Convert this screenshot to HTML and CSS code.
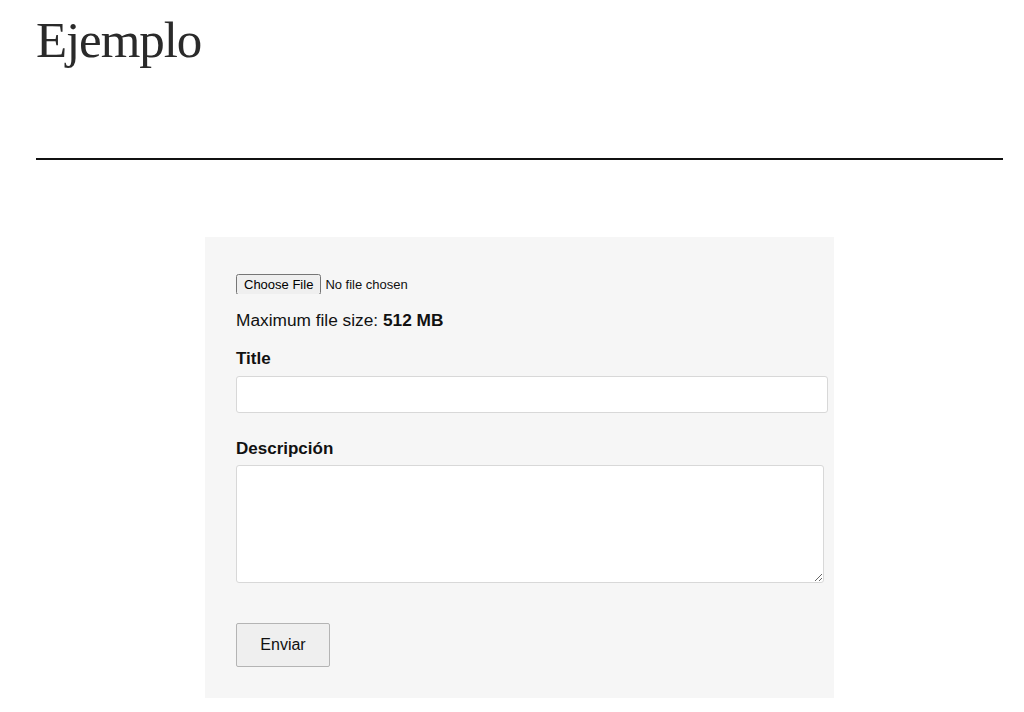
FILE: index.html
```html
<!DOCTYPE html>
<html lang="es">
<head>
<meta charset="utf-8">
<title>Ejemplo</title>
<link rel="stylesheet" href="styles.css">
</head>
<body>
<div class="page">
  <h1 class="title">Ejemplo</h1>
  <hr class="rule">
  <form class="upload">
    <input class="file" type="file">
    <p class="maxsize">Maximum file size: <strong>512 MB</strong></p>
    <label class="label" for="t">Title</label>
    <input class="text" id="t" type="text">
    <label class="label label-desc" for="d">Descripción</label>
    <textarea class="area" id="d"></textarea>
    <button class="submit" type="button">Enviar</button>
  </form>
</div>
</body>
</html>
```
FILE: styles.css
```css
html, body {
  margin: 0;
  padding: 0;
  background: #fff;
}
.page {
  padding: 0 21px 0 36px;
  font-family: "Liberation Sans", Arial, sans-serif;
  color: #111;
}
.title {
  margin: 0;
  padding-top: 8px;
  height: 118px;
  font-family: "Liberation Serif", "Times New Roman", serif;
  font-weight: 300;
  font-size: 51px;
  line-height: 64px;
  letter-spacing: -1.1px;
  color: #2a2a2a;
}
.rule {
  margin: 32px 0 0 0;
  border: 0;
  height: 2px;
  background: #111;
}
.upload {
  margin: 77px 0 0 169px;
  width: 629px;
  box-sizing: border-box;
  background: #f6f6f6;
  padding: 37px 6px 31px 31px;
  display: flex;
  flex-direction: column;
  align-items: flex-start;
}
.file {
  font-family: "Liberation Sans", Arial, sans-serif;
  font-size: 13px;
  height: 20px;
  margin: 0;
}
.maxsize {
  margin: 14px 0 0 0;
  font-size: 17.3px;
  line-height: 24px;
}
.maxsize strong {
  font-weight: 700;
}
.label {
  margin-top: 15px;
  font-size: 17px;
  line-height: 24px;
  font-weight: 700;
}
.label-desc {
  margin-top: 24px;
}
.text {
  margin-top: 5px;
  width: 592px;
  height: 37px;
  box-sizing: border-box;
  border: 1px solid #d8d8d8;
  border-radius: 3px;
  background: #fff;
}
.area {
  margin-top: 4px;
  width: 588px;
  height: 118px;
  box-sizing: border-box;
  border: 1px solid #d8d8d8;
  border-radius: 3px;
  background: #fff;
  resize: both;
}
.submit {
  margin-top: 40px;
  width: 94px;
  height: 44px;
  box-sizing: border-box;
  background: #efefef;
  border: 1px solid #b4b4b4;
  border-radius: 2px;
  font-family: "Liberation Sans", Arial, sans-serif;
  font-size: 16px;
  color: #111;
}
```
